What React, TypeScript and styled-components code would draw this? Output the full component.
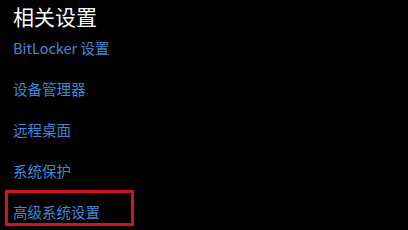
import React from "react";
import styled, { createGlobalStyle } from "styled-components";

const GlobalStyle = createGlobalStyle`
  html, body {
    margin: 0;
    padding: 0;
    background: #000;
  }
  body {
    font-family: "Noto Sans CJK SC", "Liberation Sans", sans-serif;
  }
`;

const Page = styled.div`
  width: 408px;
  height: 230px;
  background: #000;
  padding: 0 0 0 13px;
  box-sizing: border-box;
  overflow: hidden;
`;

const Title = styled.h2`
  margin: 0;
  padding-top: 1px;
  font-size: 21px;
  font-weight: 400;
  line-height: 30px;
  color: #fff;
`;

const LinkList = styled.ul`
  list-style: none;
  margin: 6px 0 0;
  padding: 0;
  display: flex;
  flex-direction: column;
  gap: 20px;
`;

const Item = styled.li`
  position: relative;
  height: 21px;
  display: flex;
  align-items: center;
`;

const Link = styled.a`
  font-size: 14.5px;
  line-height: 21px;
  color: #3d88d6;
  text-decoration: none;
  cursor: pointer;
`;

const Marker = styled.span`
  position: absolute;
  left: -8px;
  top: -11px;
  width: 129px;
  height: 36px;
  border: 3px solid #d4141c;
  box-sizing: border-box;
  pointer-events: none;
`;

const links = ["BitLocker 设置", "设备管理器", "远程桌面", "系统保护", "高级系统设置"];

export default function App() {
  return (
    <>
      <GlobalStyle />
      <Page>
        <Title>相关设置</Title>
        <LinkList>
          {links.map((label, i) => (
            <Item key={label}>
              <Link>{label}</Link>
              {i === links.length - 1 && <Marker />}
            </Item>
          ))}
        </LinkList>
      </Page>
    </>
  );
}
